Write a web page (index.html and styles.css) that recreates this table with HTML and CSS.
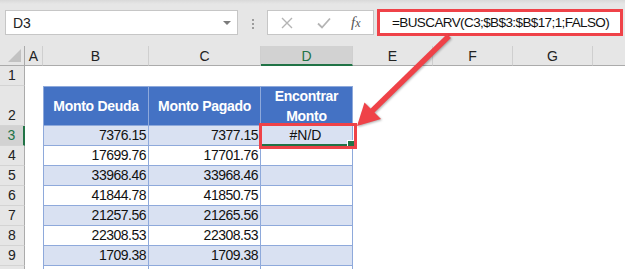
FILE: index.html
```html
<!DOCTYPE html>
<html lang="es">
<head>
<meta charset="utf-8">
<title>BUSCARV</title>
<link rel="stylesheet" href="styles.css">
</head>
<body>
<div class="app">
  <div class="toolbar">
    <div class="namebox"><span class="ref">D3</span><span class="caret"></span></div>
    <div class="grip"><i></i><i></i><i></i></div>
    <div class="buttons">
      <svg class="ico" width="12" height="12" viewBox="0 0 12 12"><path d="M1 1 L11 11 M11 1 L1 11" stroke="#b4b4b4" stroke-width="1.4" fill="none"/></svg>
      <svg class="ico" width="14" height="12" viewBox="0 0 14 12"><path d="M1 6.5 L5 10.5 L13 1.5" stroke="#b4b4b4" stroke-width="1.8" fill="none"/></svg>
      <span class="fx">f<span class="x">x</span></span>
    </div>
    <div class="formula">=BUSCARV(C3;$B$3:$B$17;1;FALSO)</div>
  </div>

  <div class="sheet">
    <div class="corner"><svg width="13" height="13" viewBox="0 0 13 13"><path d="M13 0 L13 13 L0 13 Z" fill="#c2c2c2"/></svg></div>
    <div class="ch">A</div><div class="ch">B</div><div class="ch">C</div><div class="ch sel">D</div><div class="ch">E</div><div class="ch">F</div><div class="ch">G</div><div class="ch last"></div>

    <div class="rh">1</div><div class="e"></div><div class="e"></div><div class="e"></div><div class="e"></div><div class="e"></div><div class="e"></div><div class="e"></div><div class="e"></div>

    <div class="rh">2</div><div class="e"></div>
    <div class="th first">Monto Deuda</div><div class="th">Monto Pagado</div><div class="th">Encontrar Monto</div>
    <div class="e"></div><div class="e"></div><div class="e"></div><div class="e"></div>

    <div class="rh sel">3</div><div class="e"></div>
    <div class="td first band">7376.15</div><div class="td band">7377.15</div><div class="td band act">#N/D</div>
    <div class="e"></div><div class="e"></div><div class="e"></div><div class="e"></div>

    <div class="rh">4</div><div class="e"></div>
    <div class="td first">17699.76</div><div class="td">17701.76</div><div class="td"></div>
    <div class="e"></div><div class="e"></div><div class="e"></div><div class="e"></div>

    <div class="rh">5</div><div class="e"></div>
    <div class="td first band">33968.46</div><div class="td band">33968.46</div><div class="td band"></div>
    <div class="e"></div><div class="e"></div><div class="e"></div><div class="e"></div>

    <div class="rh">6</div><div class="e"></div>
    <div class="td first">41844.78</div><div class="td">41850.75</div><div class="td"></div>
    <div class="e"></div><div class="e"></div><div class="e"></div><div class="e"></div>

    <div class="rh">7</div><div class="e"></div>
    <div class="td first band">21257.56</div><div class="td band">21265.56</div><div class="td band"></div>
    <div class="e"></div><div class="e"></div><div class="e"></div><div class="e"></div>

    <div class="rh">8</div><div class="e"></div>
    <div class="td first">22308.53</div><div class="td">22308.53</div><div class="td"></div>
    <div class="e"></div><div class="e"></div><div class="e"></div><div class="e"></div>

    <div class="rh">9</div><div class="e"></div>
    <div class="td first band">1709.38</div><div class="td band">1709.38</div><div class="td band"></div>
    <div class="e"></div><div class="e"></div><div class="e"></div><div class="e"></div>

    <div class="rh"></div><div class="e"></div>
    <div class="td first"></div><div class="td"></div><div class="td"></div>
    <div class="e"></div><div class="e"></div><div class="e"></div><div class="e"></div>
  </div>

  <div class="callout-box"></div>
  <svg class="arrow" width="625" height="269" viewBox="0 0 625 269">
    <line x1="449" y1="36" x2="370" y2="113" stroke="#ef4248" stroke-width="5.5"/>
    <polygon points="357,126 364.5,102.5 381,119" fill="#ef4248"/>
  </svg>
</div>
</body>
</html>
```
FILE: styles.css
```css
* { box-sizing: border-box; }
html, body { margin: 0; padding: 0; }
body {
  width: 625px;
  height: 269px;
  overflow: hidden;
  background: #ffffff;
  font-family: "Liberation Sans", Arial, sans-serif;
  color: #222;
}
.app { position: relative; width: 625px; height: 269px; overflow: hidden; }

/* toolbar */
.toolbar {
  height: 46px;
  display: flex;
  align-items: flex-start;
  padding: 10px 0 0 5px;
  background: linear-gradient(#d9d9d9 0px, #e6e6e6 4px, #e6e6e6 100%);
}
.namebox {
  width: 233px;
  height: 25px;
  background: #fff;
  border: 1px solid #c6c6c6;
  display: flex;
  align-items: center;
  justify-content: space-between;
  padding: 0 6px 0 7px;
  font-size: 14px;
  color: #222;
}
.caret {
  width: 0; height: 0;
  border-left: 4px solid transparent;
  border-right: 4px solid transparent;
  border-top: 4px solid #7b7b7b;
}
.grip {
  margin: 9px 0 0 14px;
  width: 3px;
  display: flex;
  flex-direction: column;
  gap: 2px;
}
.grip i { display: block; width: 2px; height: 2px; background: #9c9c9c; }
.buttons {
  margin-left: 12px;
  width: 107px;
  height: 25px;
  background: #fff;
  border: 1px solid #c6c6c6;
  display: flex;
  align-items: center;
  padding-left: 13px;
  gap: 24px;
}
.ico { display: block; }
.fx {
  font-family: "Liberation Serif", "Times New Roman", serif;
  font-style: italic;
  font-size: 15px;
  color: #555;
  margin-left: -4px;
}
.fx .x { font-size: 12px; }
.formula {
  margin: -1px 0 0 3px;
  width: 246px;
  height: 27px;
  background: #fff;
  border: 3px solid #ef4248;
  padding-left: 12px;
  font-size: 13.5px;
  letter-spacing: -0.6px;
  line-height: 21px;
  color: #111;
  white-space: nowrap;
}

/* sheet */
.sheet {
  display: grid;
  grid-template-columns: 25px 18px 106px 112px 92px 80px 80px 80px 1fr;
  grid-template-rows: 20px 20px 40px repeat(8, 20px);
  font-size: 14px;
}
.corner {
  background: #e6e6e6;
  border-right: 1px solid #ababab;
  border-bottom: 1px solid #ababab;
  display: flex;
  align-items: flex-end;
  justify-content: flex-end;
  padding: 0 3px 3px 0;
}
.corner svg { display: block; }
.ch {
  background: #e6e6e6;
  border-right: 1px solid #cfcfcf;
  border-bottom: 1px solid #ababab;
  text-align: center;
  line-height: 20px;
  color: #222;
}
.ch.last { border-right: none; }
.ch.sel {
  background: #d2d2d2;
  color: #217346;
  border-bottom: 2px solid #217346;
}
.rh {
  background: #e6e6e6;
  border-right: 1px solid #ababab;
  border-bottom: 1px solid #d4d4d4;
  display: flex;
  align-items: flex-end;
  justify-content: center;
  line-height: 20px;
  color: #222;
}
.rh.sel {
  background: #d2d2d2;
  color: #217346;
  border-right: 2px solid #217346;
}
.e { background: #fff; }
.th {
  background: #4472c4;
  color: #fff;
  font-weight: bold;
  letter-spacing: -0.3px;
  text-align: center;
  display: flex;
  align-items: center;
  justify-content: center;
  line-height: 20px;
  border-top: 1px solid #8ea9db;
  border-right: 1px solid #8ea9db;
  border-bottom: 1px solid #8ea9db;
  padding: 0 4px;
}
.td {
  background: #fff;
  border-right: 1px solid #8ea9db;
  border-bottom: 1px solid #8ea9db;
  text-align: right;
  padding-right: 2px;
  line-height: 19px;
  letter-spacing: -0.5px;
  color: #111;
  white-space: nowrap;
}
.first { border-left: 1px solid #8ea9db; }
.td.band { background: #d9e1f2; }
.td.act {
  position: relative;
  text-align: center;
  letter-spacing: 0;
  border-bottom: 2px solid #217346;
}
.td.act::after {
  content: "";
  position: absolute;
  right: -3px;
  bottom: -4px;
  width: 6px;
  height: 6px;
  background: #217346;
  border: 1px solid #fff;
}

/* annotations */
.callout-box {
  position: absolute;
  left: 259px;
  top: 123px;
  width: 98px;
  height: 26px;
  border: 3px solid #ef4248;
}
.arrow {
  position: absolute;
  left: 0;
  top: 0;
  pointer-events: none;
  filter: drop-shadow(1px 1px 1px rgba(0,0,0,0.3));
}
```
